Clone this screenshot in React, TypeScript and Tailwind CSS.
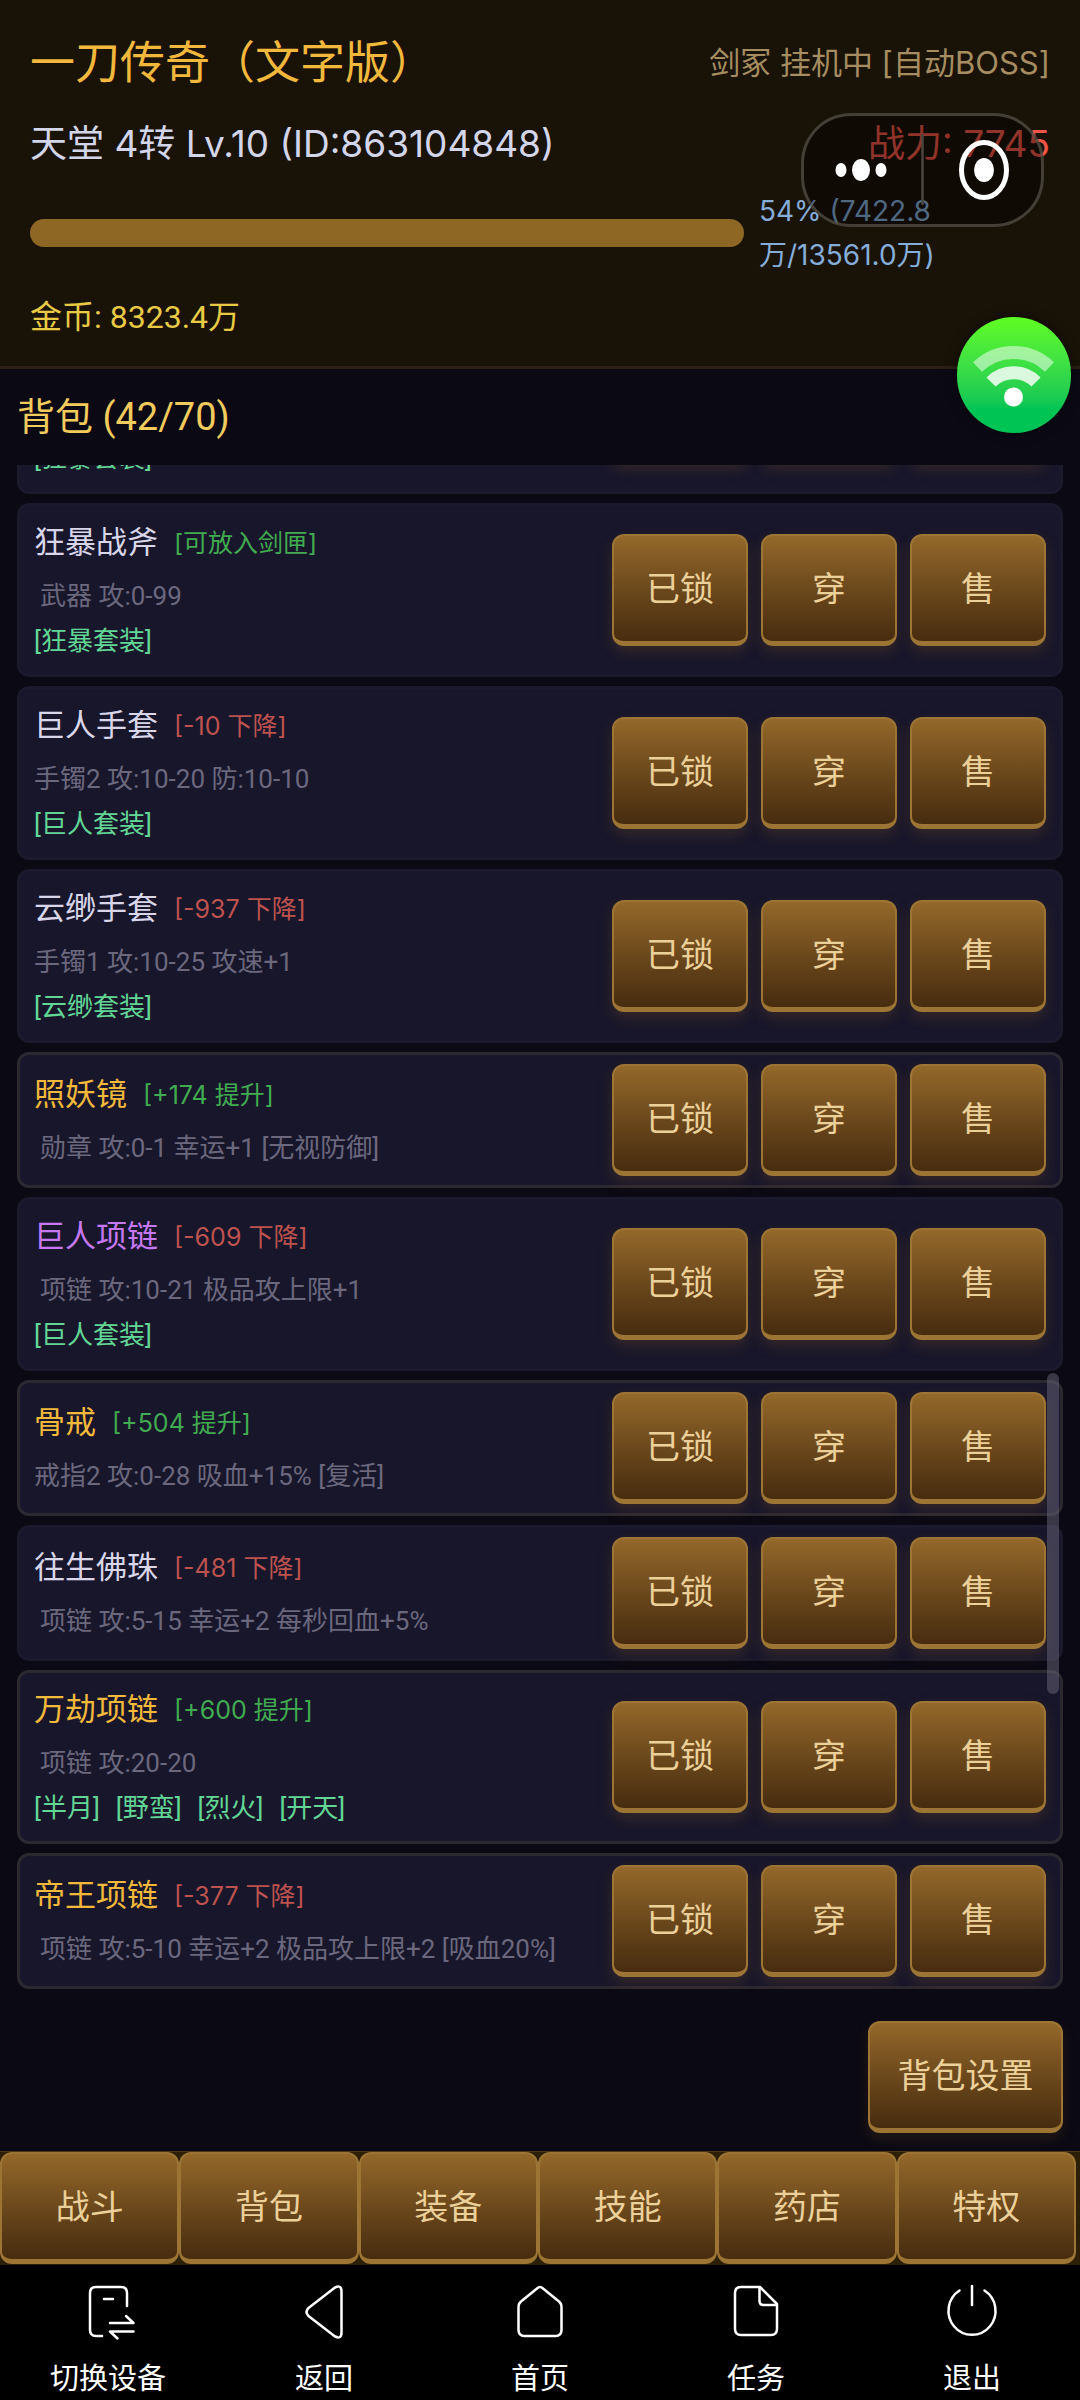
import React from "react";

type Tone = "common" | "rare" | "legend";

interface Item {
  id: number;
  name: string;
  tone: Tone;
  tag?: string;
  tagKind?: "up" | "down";
  indent?: boolean;
  stats: string;
  sets?: string[];
}

const items: Item[] = [
  { id: 1, name: "", tone: "common", stats: "", sets: ["[狂暴套装]"] },
  { id: 2, name: "狂暴战斧", tone: "common", tag: "[可放入剑匣]", tagKind: "up", indent: true, stats: "武器 攻:0-99", sets: ["[狂暴套装]"] },
  { id: 3, name: "巨人手套", tone: "common", tag: "[-10 下降]", tagKind: "down", stats: "手镯2 攻:10-20 防:10-10", sets: ["[巨人套装]"] },
  { id: 4, name: "云缈手套", tone: "common", tag: "[-937 下降]", tagKind: "down", stats: "手镯1 攻:10-25 攻速+1", sets: ["[云缈套装]"] },
  { id: 5, name: "照妖镜", tone: "legend", tag: "[+174 提升]", tagKind: "up", indent: true, stats: "勋章 攻:0-1 幸运+1 [无视防御]" },
  { id: 6, name: "巨人项链", tone: "rare", tag: "[-609 下降]", tagKind: "down", indent: true, stats: "项链 攻:10-21 极品攻上限+1", sets: ["[巨人套装]"] },
  { id: 7, name: "骨戒", tone: "legend", tag: "[+504 提升]", tagKind: "up", stats: "戒指2 攻:0-28 吸血+15% [复活]" },
  { id: 8, name: "往生佛珠", tone: "common", tag: "[-481 下降]", tagKind: "down", indent: true, stats: "项链 攻:5-15 幸运+2 每秒回血+5%" },
  { id: 9, name: "万劫项链", tone: "legend", tag: "[+600 提升]", tagKind: "up", indent: true, stats: "项链 攻:20-20", sets: ["[半月]", "[野蛮]", "[烈火]", "[开天]"] },
  { id: 10, name: "帝王项链", tone: "legend", tag: "[-377 下降]", tagKind: "down", indent: true, stats: "项链 攻:5-10 幸运+2 极品攻上限+2 [吸血20%]" },
];

const nameColor: Record<Tone, string> = {
  common: "text-[#d9d6ea]",
  rare: "text-[#c678f2]",
  legend: "text-[#f2b93b]",
};

const tabs = ["战斗", "背包", "装备", "技能", "药店", "特权"];

function GoldButton({ children, className = "" }: { children: React.ReactNode; className?: string }) {
  return (
    <button
      className={`h-[112px] rounded-xl border-2 border-b-[5px] border-[#9c7434] bg-linear-to-b from-[#94682a] to-[#472c0f] text-[34px] leading-[40px] text-[#ecd09a] ${className}`}
    >
      {children}
    </button>
  );
}

function ItemRow({ item }: { item: Item }) {
  return (
    <li
      className={`flex shrink-0 items-center justify-between rounded-xl border-[3px] bg-[#18162b] px-[14px] ${
        item.sets ? "h-[174px]" : "h-[136px]"
      } ${item.tone === "legend" ? "border-[#2c2830]" : "border-[#1b192c]"}`}
    >
      <div className="pt-[2px] whitespace-nowrap">
        <div className="mb-[6px] flex min-h-12 items-center gap-4 leading-[48px]">
          <span className={`text-[31px] ${nameColor[item.tone]}`}>{item.name}</span>
          {item.tag && (
            <span
              className={`font-[Inter,'Noto_Sans_CJK_SC',sans-serif] text-[25px] ${
                item.tagKind === "up" ? "text-[#41ab50]" : "text-[#bd524e]"
              }`}
            >
              {item.tag}
            </span>
          )}
        </div>
        <p className={`min-h-[46px] text-[26px] leading-[46px] text-[#6b687e] ${item.indent ? "pl-[6px]" : ""}`}>{item.stats}</p>
        {item.sets && (
          <div className="flex gap-4 text-[26px] leading-[44px] text-[#62d695]">
            {item.sets.map((s) => (
              <span key={s}>{s}</span>
            ))}
          </div>
        )}
      </div>
      <div className="flex gap-[13px]">
        <GoldButton className="w-[136px] shadow-[0_6px_14px_rgba(140,95,30,0.25)]">已锁</GoldButton>
        <GoldButton className="w-[136px] shadow-[0_6px_14px_rgba(140,95,30,0.25)]">穿</GoldButton>
        <GoldButton className="w-[136px] shadow-[0_6px_14px_rgba(140,95,30,0.25)]">售</GoldButton>
      </div>
    </li>
  );
}

function SystemIcon({ children }: { children: React.ReactNode }) {
  return (
    <svg
      className="h-[54px] w-[54px] overflow-visible"
      viewBox="0 0 54 54"
      fill="none"
      stroke="white"
      strokeWidth="2.5"
      strokeLinecap="round"
      strokeLinejoin="round"
    >
      {children}
    </svg>
  );
}

const systemNav = [
  {
    label: "切换设备",
    icon: (
      <>
        <path d="M46 21V8q0-6-6-6H15q-6 0-6 6v37q0 6 6 6h6" />
        <path d="M23 14h9" />
        <path d="M29 38h23.500l-7.500-7" />
        <path d="M52.500 46.500H29l7.500 7" />
      </>
    ),
  },
  { label: "返回", icon: <path d="M38 2.500 11.500 23q-4 4 0 8L38 51.500q6.500 3 6.500-4V6.500Q44.500-.5 38 2.500Z" /> },
  { label: "首页", icon: <path d="M5.500 22q0-3.500 2.500-5.500L24 3.500q3-3 6 0L46 16.500q2.500 2 2.500 5.500v23q0 6-6 6h-31q-6 0-6-6Z" /> },
  {
    label: "任务",
    icon: (
      <>
        <path d="M31 2H12Q6 2 6 8v36q0 6 6 6h30q6 0 6-6V19Z" />
        <path d="M30.500 3v13q0 4 4 4H47" />
      </>
    ),
  },
  {
    label: "退出",
    icon: (
      <>
        <path d="M14.500 5.500A23.500 24 0 1 0 39.500 5.500" />
        <path d="M27 1v19" />
      </>
    ),
  },
];

export default function App() {
  return (
    <div className="relative flex h-screen flex-col bg-[#0b0914] font-[Roboto,'Noto_Sans_CJK_SC',sans-serif]">
      {/* Player status */}
      <header className="border-b-[3px] border-[#2b2013] bg-[#191207] px-[30px] pt-[31px] pb-[25px] font-[Inter,'Noto_Sans_CJK_SC',sans-serif]">
        <div className="flex items-center justify-between">
          <h1 className="text-[45px] leading-[64px] text-[#f2b83c]">一刀传奇（文字版）</h1>
          <span className="text-[31px] leading-[48px] text-[#a58d60]">剑冢 挂机中 [自动BOSS]</span>
        </div>
        <div className="mt-[21px] flex items-center justify-between text-[37px] leading-[56px]">
          <span className="text-[#d3d6ea]">天堂 4转 Lv.10 (ID:863104848)</span>
          <span className="text-[#f05545]">战力: 7745</span>
        </div>
        <div className="mt-[17px] flex items-center gap-[15px]">
          <div className="h-7 flex-1 rounded-[14px] bg-[#8f6725]" />
          <p className="w-[291px] text-[28px] leading-[44px] text-[#84add9]">
            54% (7422.8
            <br />
            万/13561.0万)
          </p>
        </div>
        <p className="mt-4 font-[Roboto,'Noto_Sans_CJK_SC',sans-serif] text-[32px] leading-[48px] text-[#e8ca45]">金币: 8323.4万</p>
      </header>

      {/* Bag */}
      <main className="flex min-h-0 flex-1 flex-col px-[17px]">
        <h2 className="py-[21px] text-[38px] leading-[54px] text-[#f2cb5c]">背包 (42/70)</h2>
        <div className="relative flex min-h-0 flex-1 flex-col">
          <ul className="flex min-h-0 flex-1 flex-col justify-end gap-[9px] overflow-hidden">
            {items.map((item) => (
              <ItemRow key={item.id} item={item} />
            ))}
          </ul>
          {/* scroll thumb */}
          <div className="absolute right-1 bottom-[295px] h-[321px] w-3 rounded-full bg-[#6a667a]/50" />
        </div>
        <div className="flex justify-end pt-8 pb-[18px]">
          <GoldButton className="w-[195px] shadow-[0_6px_14px_rgba(140,95,30,0.2)]">背包设置</GoldButton>
        </div>
      </main>

      <nav className="flex border-t border-[#4a3516] bg-[#2c1f08] pr-1 pb-px">
        {tabs.map((tab) => (
          <GoldButton key={tab} className="flex-1">
            {tab}
          </GoldButton>
        ))}
      </nav>

      {/* Device bar */}
      <footer className="grid grid-cols-5 bg-black pt-5 pb-px">
        {systemNav.map((entry) => (
          <button key={entry.label} className="flex flex-col items-center gap-5 text-[29px] leading-[40px] text-white">
            <SystemIcon>{entry.icon}</SystemIcon>
            {entry.label}
          </button>
        ))}
      </footer>

      {/* Mini program capsule */}
      <div className="absolute top-[113px] right-9 flex h-[114px] w-[243px] rounded-[50px] border-[3px] border-[#5a554c]/70 bg-black/40">
        <svg className="h-full w-full" viewBox="0 0 237 108" fill="white">
          <ellipse cx="37" cy="54" rx="5.500" ry="7" />
          <ellipse cx="57" cy="54" rx="9" ry="11" />
          <ellipse cx="77" cy="54" rx="5.500" ry="7" />
          <path d="M118.500 18v71" stroke="#4b463e" strokeWidth="2.500" />
          <ellipse cx="180" cy="54" rx="22.500" ry="27.500" fill="none" stroke="white" strokeWidth="5" />
          <ellipse cx="180" cy="54" rx="10" ry="12" />
        </svg>
      </div>

      {/* Network quality bubble */}
      <div className="absolute top-[317px] right-[9px] h-[116px] w-[114px] rounded-full bg-linear-to-b from-[#5cf926] from-5% to-[#00c454] to-80% shadow-[0_0_12px_rgba(0,0,0,0.5)]">
        <svg className="h-full w-full" viewBox="0 0 114 116" fill="none" stroke="white" strokeWidth="13" strokeLinejoin="round">
          <path d="M20.500 50A52 52 0 0 1 92.500 50" opacity="0.5" />
          <path d="M34 65A32 32 0 0 1 79 65" opacity="0.82" />
          <circle cx="56.500" cy="80" r="9.500" fill="white" stroke="none" />
        </svg>
      </div>
    </div>
  );
}
